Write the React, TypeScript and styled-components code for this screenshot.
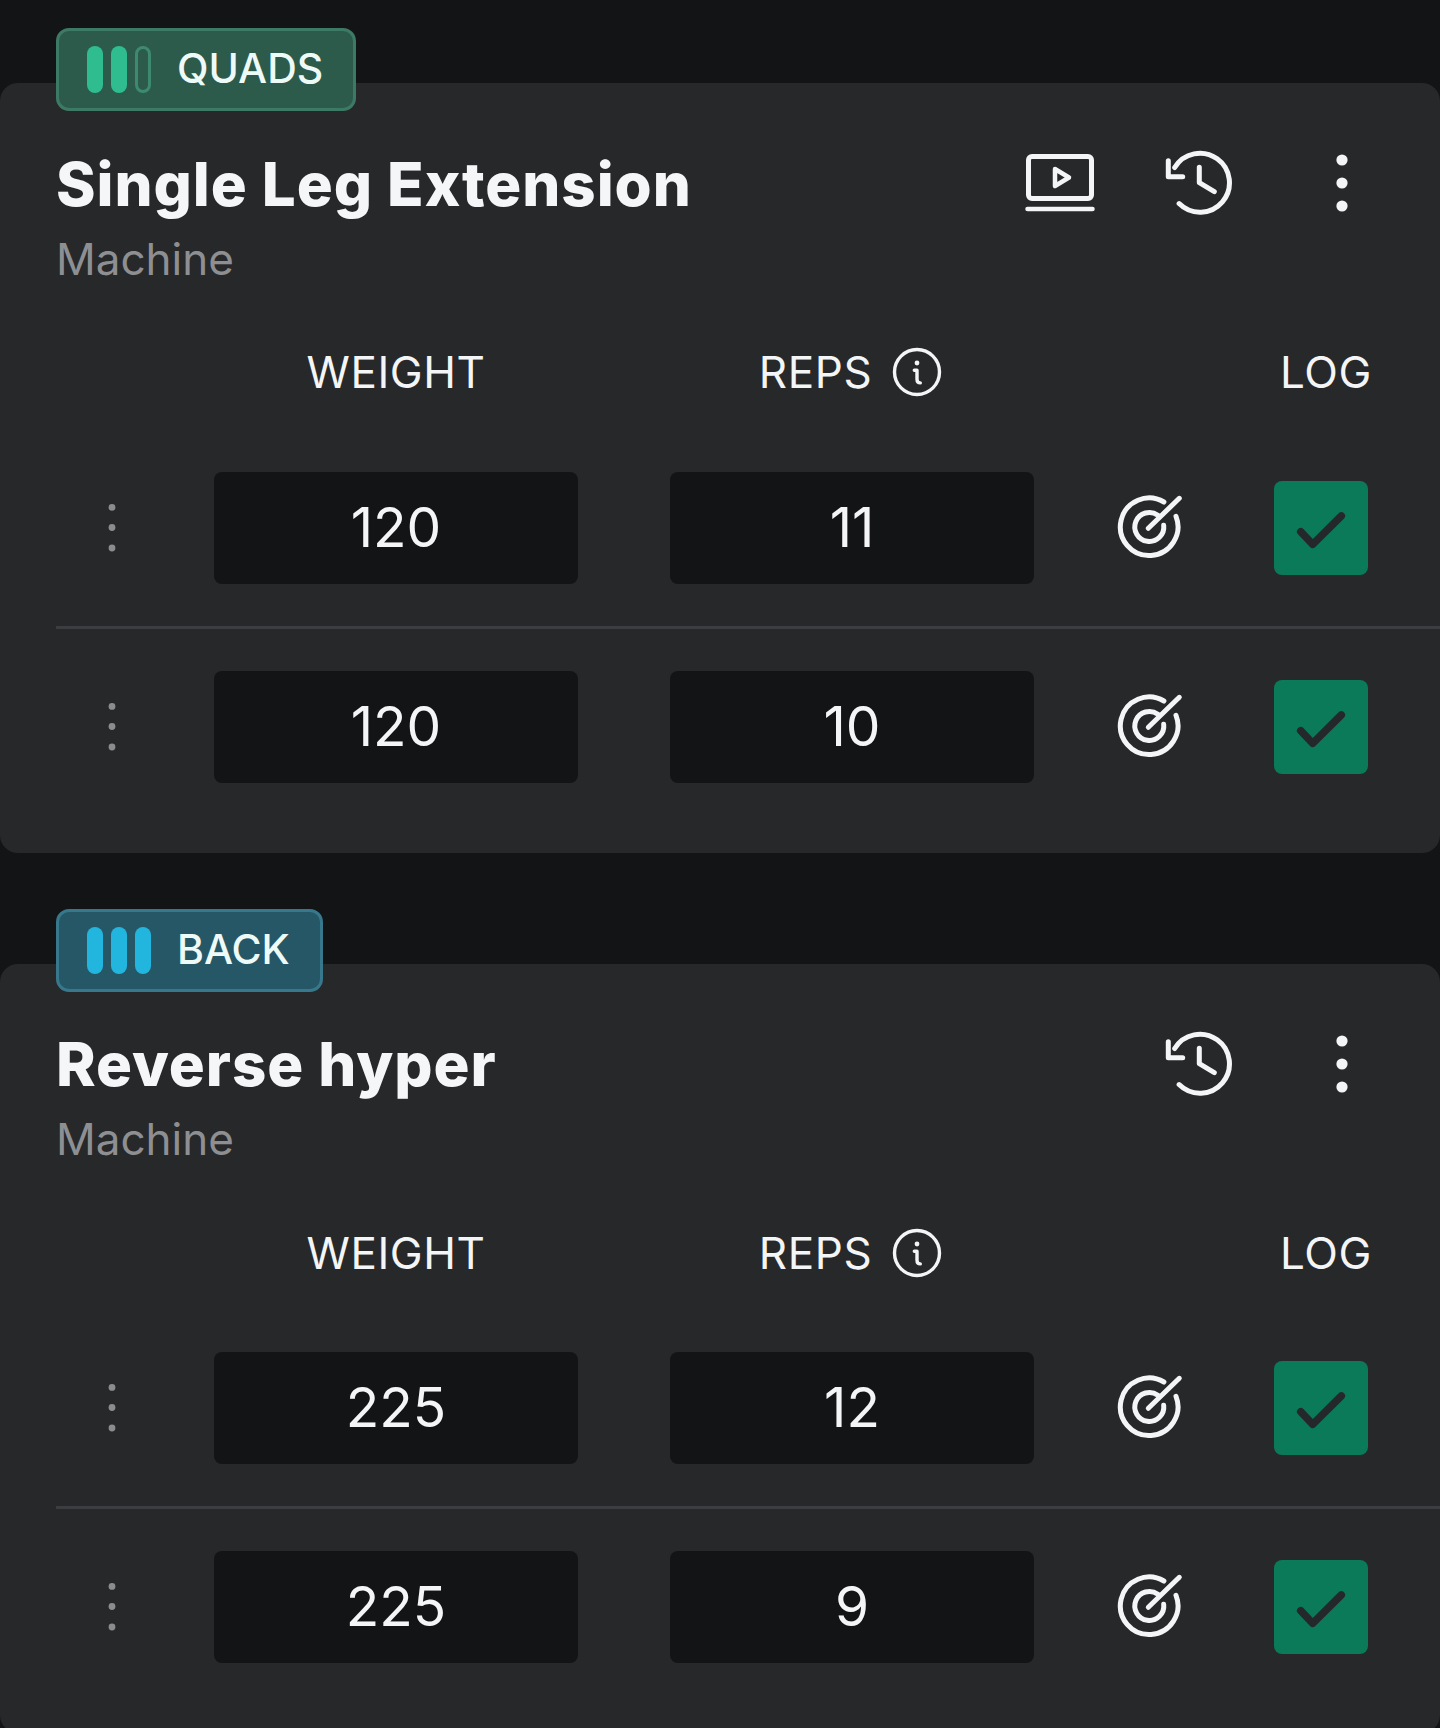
import React from "react";
import styled, { createGlobalStyle } from "styled-components";

const Global = createGlobalStyle`
  html, body { margin: 0; padding: 0; background: #131416; }
  html { overflow: hidden; }
  body { font-family: "Inter", "Liberation Sans", sans-serif; color: #f4f5f7; }
`;

const Page = styled.main`
  width: 1440px;
  height: 1728px;
  overflow: hidden;
  padding-top: 83px;
  box-sizing: border-box;
  display: flex;
  flex-direction: column;
  gap: 111px;
`;

const Card = styled.section`
  position: relative;
  flex: none;
  background: #27282a;
  border-radius: 18px;
  padding-bottom: 28px;
`;

const Badge = styled.div<{ $bg: string; $edge: string }>`
  position: absolute;
  top: -55px;
  left: 56px;
  height: 83px;
  box-sizing: border-box;
  display: flex;
  align-items: center;
  gap: 26px;
  padding: 0 30px 0 28px;
  background: ${(p) => p.$bg};
  border: 3px solid ${(p) => p.$edge};
  border-radius: 13px;
  font-size: 41px;
  font-weight: 500;
  color: #eefaf8;
`;

const BadgeText = styled.span`
  margin-top: -3px;
`;

const Bars = styled.div`
  display: flex;
  gap: 8px;
`;

const Bar = styled.span<{ $color: string; $empty?: string }>`
  width: 16px;
  height: 47px;
  box-sizing: border-box;
  border-radius: 8px;
  background: ${(p) => (p.$empty ? "transparent" : p.$color)};
  border: ${(p) => (p.$empty ? `3px solid ${p.$empty}` : "none")};
`;

const Header = styled.header`
  display: flex;
  justify-content: space-between;
  align-items: flex-start;
  padding: 65.7px 0 0 56px;
`;

const Titles = styled.div`
  display: flex;
  flex-direction: column;
  gap: 12px;
`;

const Title = styled.h2`
  margin: 0;
  font-size: 60px;
  line-height: 70px;
  font-weight: 800;
  letter-spacing: 0.95px;
  color: #f5f6f8;
`;

const Subtitle = styled.div`
  font-size: 44px;
  line-height: 56px;
  color: #8e8f92;
`;

const Actions = styled.div`
  display: flex;
  align-items: flex-start;
  margin-top: 1.3px;
  padding-right: 91px;
`;

const IconSvg = styled.svg`
  display: block;
  flex: none;
  fill: none;
  stroke: #f4f5f7;
  stroke-linecap: round;
  stroke-linejoin: round;
`;

const VideoIcon = styled(IconSvg)`
  margin-right: 63px;
`;

const HistoryIcon = styled(IconSvg)`
  margin-right: 98px;
`;

const MoreIcon = styled.svg`
  display: block;
  flex: none;
  margin-top: 3px;
  fill: #f4f5f7;
`;

const Grid = styled.div`
  display: grid;
  grid-template-columns: 158px 364px 456px 240px 94px;
  align-items: center;
`;

const LabelRow = styled(Grid)`
  margin: 57.3px 0 29.6px;
  padding-left: 56px;
  font-size: 44px;
  line-height: 56px;
  letter-spacing: 0.6px;
  color: #f4f5f7;
`;

const WeightLabel = styled.div`
  grid-column: 2;
  text-align: center;
`;

const RepsLabel = styled.div`
  grid-column: 3;
  margin-left: 90px;
  display: flex;
  justify-content: center;
  align-items: center;
  gap: 19px;
`;

const LogLabel = styled.div`
  grid-column: 5;
  justify-self: end;
  margin-right: -4px;
  white-space: nowrap;
`;

const Row = styled(Grid)`
  margin-left: 56px;
  padding: 42px 0;
  & + & {
    border-top: 3px solid #3c3d40;
  }
`;

const DragIcon = styled.svg`
  display: block;
  margin-left: 52px;
  fill: #8b8c8e;
`;

const Field = styled.div`
  height: 112px;
  box-sizing: border-box;
  padding-bottom: 2px;
  display: flex;
  align-items: center;
  justify-content: center;
  background: #131416;
  border-radius: 8px;
  font-size: 55px;
  font-weight: 400;
  color: #f4f5f7;
`;

const RepsField = styled(Field)`
  margin-left: 92px;
`;

const TargetIcon = styled(IconSvg)`
  margin-left: 80px;
`;

const Check = styled.div`
  width: 94px;
  height: 94px;
  border-radius: 8px;
  background: #0a7a58;
`;

const CheckMark = styled.svg`
  display: block;
  fill: none;
  stroke: #25282a;
  stroke-width: 7.5;
  stroke-linecap: round;
  stroke-linejoin: round;
`;

type SetRow = { weight: number; reps: number };
type Exercise = {
  muscle: string;
  bg: string;
  edge: string;
  bar: string;
  emptyBar?: string;
  title: string;
  video?: boolean;
  sets: SetRow[];
};

const exercises: Exercise[] = [
  {
    muscle: "QUADS",
    bg: "#2c5b4c",
    edge: "#3d7a66",
    bar: "#2fbd90",
    emptyBar: "#3d8a70",
    title: "Single Leg Extension",
    video: true,
    sets: [
      { weight: 120, reps: 11 },
      { weight: 120, reps: 10 },
    ],
  },
  {
    muscle: "BACK",
    bg: "#265766",
    edge: "#37788c",
    bar: "#22b5de",
    title: "Reverse hyper",
    sets: [
      { weight: 225, reps: 12 },
      { weight: 225, reps: 9 },
    ],
  },
];

const Video = () => (
  <VideoIcon width={76} height={64} viewBox="0 0 76 64" strokeWidth={5}>
    <rect x={6.5} y={6.5} width={63} height={42} rx={3.5} />
    <path d="M33 19L47 27.5L33 36Z" strokeWidth={4.5} />
    <path d="M5.5 59H70.5" strokeWidth={4.5} />
  </VideoIcon>
);

const History = () => (
  <HistoryIcon width={76} height={70} viewBox="0 0 76 70" strokeWidth={5}>
    <path d="M13.7 17.5A29.5 29.5 0 1 1 18.1 53.6" />
    <path d="M7.3 10.7V26.7H21.7" />
    <path d="M38.3 17.3V32.7L53.3 41.7" />
  </HistoryIcon>
);

const More = () => (
  <MoreIcon width={14} height={60} viewBox="0 0 14 60">
    <circle cx={7} cy={7} r={5.6} />
    <circle cx={7} cy={30} r={5.6} />
    <circle cx={7} cy={53} r={5.6} />
  </MoreIcon>
);

const Info = () => (
  <IconSvg width={52} height={52} viewBox="0 0 52 52" strokeWidth={3.4}>
    <circle cx={26} cy={26} r={22.5} />
    <circle cx={26} cy={17} r={2.4} fill="#f4f5f7" stroke="none" />
    <path d="M23.3 24.3H26V33.3Q26 36.9 29.3 36.9" />
  </IconSvg>
);

const Drag = () => (
  <DragIcon width={8} height={48} viewBox="0 0 8 48">
    <circle cx={4} cy={3.4} r={3.4} />
    <circle cx={4} cy={23.5} r={3.4} />
    <circle cx={4} cy={44} r={3.4} />
  </DragIcon>
);

const Target = () => (
  <TargetIcon width={72} height={72} viewBox="0 0 72 72" strokeWidth={5}>
    <path d="M49.9 10A28.8 28.8 0 1 0 62 24.3" />
    <path d="M43.9 23.3A14.5 14.5 0 1 0 49.7 33.3" />
    <path d="M34.3 36.3L65.3 6.3" />
  </TargetIcon>
);

const Done = () => (
  <Check>
    <CheckMark width={94} height={94} viewBox="0 0 94 94">
      <path d="M26.7 50.7L38.7 63.3L67.3 35" />
    </CheckMark>
  </Check>
);

export default function App() {
  return (
    <>
      <Global />
      <Page>
        {exercises.map((ex) => (
          <Card key={ex.title}>
            <Badge $bg={ex.bg} $edge={ex.edge}>
              <Bars>
                <Bar $color={ex.bar} />
                <Bar $color={ex.bar} />
                <Bar $color={ex.bar} $empty={ex.emptyBar} />
              </Bars>
              <BadgeText>{ex.muscle}</BadgeText>
            </Badge>
            <Header>
              <Titles>
                <Title>{ex.title}</Title>
                <Subtitle>Machine</Subtitle>
              </Titles>
              <Actions>
                {ex.video && <Video />}
                <History />
                <More />
              </Actions>
            </Header>
            <LabelRow>
              <WeightLabel>WEIGHT</WeightLabel>
              <RepsLabel>
                REPS
                <Info />
              </RepsLabel>
              <LogLabel>LOG</LogLabel>
            </LabelRow>
            {ex.sets.map((s, i) => (
              <Row key={i}>
                <Drag />
                <Field>{s.weight}</Field>
                <RepsField>{s.reps}</RepsField>
                <Target />
                <Done />
              </Row>
            ))}
          </Card>
        ))}
      </Page>
    </>
  );
}
